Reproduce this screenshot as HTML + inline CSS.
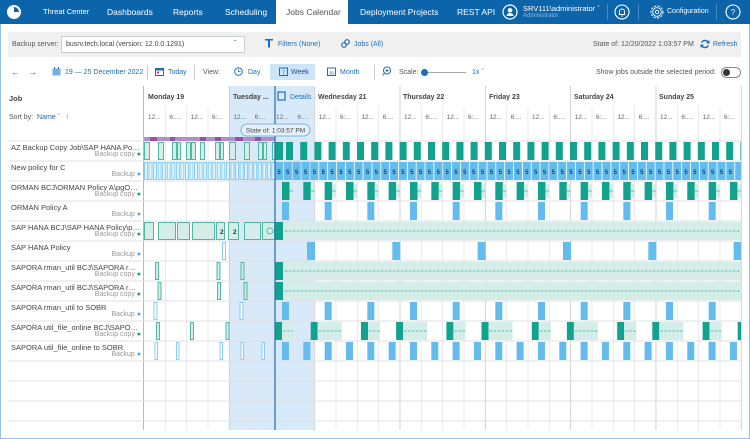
<!DOCTYPE html>
<html><head><meta charset="utf-8">
<style>
*{margin:0;padding:0;box-sizing:border-box}
body{width:750px;height:439px;position:relative;overflow:hidden;background:#fff;font-family:"Liberation Sans",sans-serif;font-size:8px;color:#444}
.a{position:absolute;white-space:nowrap}
#nav{position:absolute;left:0;top:0;width:750px;height:24px;background:#0c64ab}
.nt{position:absolute;top:7px;color:#fff;font-size:8.5px}
.blue{color:#1c6fb6}
.b{font-weight:bold}
.lbl{position:absolute;left:11px;width:129px;overflow:hidden;text-overflow:ellipsis;white-space:nowrap;font-size:7.5px;color:#444}
.typ{position:absolute;right:0;font-size:7px;color:#999;text-align:right;white-space:nowrap}
.tb{font-size:7px}
</style></head><body>
<div id="nav">
 <svg class="a" style="left:6px;top:4px" width="16" height="16"><circle cx="8" cy="8" r="7" fill="#fff"/><path d="M8 8V3A5 5 0 0 1 13 8Z" fill="#0c64ab"/></svg>
 <div class="nt" style="left:43px;font-size:7.5px">Threat Center</div>
 <div class="nt" style="left:107px">Dashboards</div>
 <div class="nt" style="left:173px">Reports</div>
 <div class="nt" style="left:225px">Scheduling</div>
 <div class="a" style="left:276px;top:0;width:72px;height:24px;background:#fff"></div>
 <div class="nt" style="left:286px;color:#555">Jobs Calendar</div>
 <div class="nt" style="left:360px">Deployment Projects</div>
 <div class="nt" style="left:457px">REST API</div>
 <svg class="a" style="left:502px;top:4px" width="16" height="16"><circle cx="8" cy="8" r="7" fill="none" stroke="#fff" stroke-width="1.2"/><circle cx="8" cy="6.3" r="2.3" fill="#fff"/><path d="M4.5 12a3.5 3 0 0 1 7 0Z" fill="#fff"/></svg>
 <div class="a" style="left:523px;top:4px;color:#fff;font-size:7.5px">SRV111\administrator &#711;</div>
 <div class="a" style="left:523px;top:13px;color:#8fb9e0;font-size:6px">Administrator</div>
 <div class="a" style="left:607px;top:4px;width:1px;height:16px;background:#4a8bc7"></div>
 <svg class="a" style="left:614px;top:4px" width="16" height="16"><circle cx="8" cy="8" r="7" fill="none" stroke="#fff" stroke-width="1.1"/><path d="M5.5 10.5V7.5a2.5 2.5 0 0 1 5 0v3ZM4.8 10.5h6.4M7.2 12h1.6" fill="none" stroke="#fff" stroke-width="0.9"/></svg>
 <div class="a" style="left:638px;top:4px;width:1px;height:16px;background:#4a8bc7"></div>
 <svg class="a" style="left:648px;top:3px" width="18" height="18"><circle cx="9" cy="9" r="6" fill="none" stroke="#fff" stroke-width="1" stroke-dasharray="2.2 1.4"/><circle cx="9" cy="9" r="4.3" fill="none" stroke="#fff" stroke-width="0.9"/><circle cx="9" cy="9" r="1.7" fill="none" stroke="#fff" stroke-width="0.9"/></svg>
 <div class="a" style="left:667px;top:8px;color:#fff;font-size:7px">Configuration</div>
 <div class="a" style="left:716px;top:4px;width:1px;height:16px;background:#4a8bc7"></div>
 <svg class="a" style="left:725px;top:4px" width="16" height="16"><circle cx="8" cy="8" r="7" fill="none" stroke="#fff" stroke-width="1.1"/><text x="8" y="11" fill="#fff" font-size="8" text-anchor="middle" font-family="Liberation Sans">?</text></svg>
</div>
<div class="a" style="left:0;top:24px;width:750px;height:415px;border:1.5px solid #93c1e8;border-top:none"></div>
<!-- toolbar -->
<div class="a" style="left:8px;top:32px;width:733px;height:25px;background:#f0f0f0"></div>
<div class="a tb" style="left:12px;top:41px;color:#555">Backup server:</div>
<div class="a" style="left:61px;top:36px;width:184px;height:17px;background:#fff;border:1px solid #ccc"></div>
<div class="a tb" style="left:66px;top:41px;color:#444">busrv.tech.local (version: 12.0.0.1291)</div>
<div class="a blue" style="left:234px;top:39px;font-size:8px">&#711;</div>
<svg class="a" style="left:265px;top:39px" width="8" height="9"><path d="M0 0h8v1.5H5v7H3v-7H0Z" fill="#1c6fb6"/></svg>
<div class="a blue tb" style="left:278px;top:41px">Filters (None)</div>
<svg class="a" style="left:341px;top:39px" width="9" height="9"><circle cx="3" cy="6" r="2.3" fill="none" stroke="#1c6fb6" stroke-width="1.2"/><circle cx="6" cy="3" r="2.3" fill="none" stroke="#1c6fb6" stroke-width="1.2"/></svg>
<div class="a blue tb" style="left:354px;top:41px">Jobs (All)</div>
<div class="a tb" style="left:593px;top:41px;color:#555">State of: 12/20/2022 1:03:57 PM</div>
<svg class="a" style="left:700px;top:39px" width="10" height="10"><path d="M8.5 4A3.7 3.7 0 0 0 1.7 3.5M1.5 6A3.7 3.7 0 0 0 8.3 6.5" fill="none" stroke="#1c6fb6" stroke-width="1.5"/><path d="M9.5 1v3.5H6ZM0.5 9V5.5H4Z" fill="#1c6fb6"/></svg>
<div class="a blue tb" style="left:713px;top:41px">Refresh</div>
<!-- controls row -->
<div class="a blue" style="left:11px;top:67px;font-size:9px">&#8592;</div>
<div class="a blue" style="left:28px;top:67px;font-size:9px">&#8594;</div>
<svg class="a" style="left:52px;top:67px" width="9" height="9"><rect x="0.5" y="1.5" width="8" height="7" fill="#7aaedc"/><rect x="2" y="0" width="1" height="2" fill="#1c6fb6"/><rect x="6" y="0" width="1" height="2" fill="#1c6fb6"/></svg>
<div class="a blue tb" style="left:65px;top:69px">19 — 25 December 2022</div>
<div class="a" style="left:147px;top:65px;width:1px;height:15px;background:#ccc"></div>
<svg class="a" style="left:155px;top:67px" width="9" height="9"><rect x="0.5" y="1.5" width="8" height="7" fill="none" stroke="#1c6fb6"/><rect x="1" y="2" width="7" height="1.5" fill="#1c6fb6"/><rect x="2" y="4.5" width="2" height="2" fill="#d33"/></svg>
<div class="a blue tb" style="left:168px;top:69px">Today</div>
<div class="a" style="left:194px;top:65px;width:1px;height:15px;background:#ccc"></div>
<div class="a tb" style="left:203px;top:69px;color:#555">View:</div>
<svg class="a" style="left:234px;top:67px" width="9" height="9"><circle cx="4.5" cy="4.5" r="3.8" fill="none" stroke="#1c6fb6"/><path d="M4.5 2v2.5h2" fill="none" stroke="#1c6fb6" stroke-width="0.8"/></svg>
<div class="a blue tb" style="left:248px;top:69px">Day</div>
<div class="a" style="left:270px;top:64px;width:45px;height:16px;background:#cde5f8"></div>
<svg class="a" style="left:279px;top:67px" width="9" height="9"><rect x="0.5" y="1" width="8" height="7.5" fill="none" stroke="#1c6fb6"/><text x="4.5" y="7.5" font-size="5" fill="#1c6fb6" text-anchor="middle" font-family="Liberation Sans">7</text></svg>
<div class="a tb" style="left:291px;top:69px;color:#1a4f80">Week</div>
<svg class="a" style="left:327px;top:67px" width="9" height="9"><rect x="0.5" y="1" width="8" height="7.5" fill="none" stroke="#1c6fb6"/><text x="4.5" y="7.5" font-size="4.5" fill="#1c6fb6" text-anchor="middle" font-family="Liberation Sans">30</text></svg>
<div class="a blue tb" style="left:340px;top:69px">Month</div>
<div class="a" style="left:374px;top:65px;width:1px;height:15px;background:#ccc"></div>
<svg class="a" style="left:382px;top:66px" width="10" height="10"><circle cx="5" cy="4.5" r="3.5" fill="none" stroke="#1c6fb6"/><path d="M3.5 4.5h3M5 3v3M2.5 7l-2 2.5" stroke="#1c6fb6" stroke-width="1"/></svg>
<div class="a tb" style="left:399px;top:69px;color:#555">Scale:</div>
<div class="a" style="left:424px;top:72px;width:42px;height:1px;background:#aaa"></div>
<div class="a" style="left:421px;top:69px;width:7px;height:7px;border-radius:50%;background:#1c6fb6"></div>
<div class="a blue tb" style="left:472px;top:69px">1x &#711;</div>
<div class="a tb" style="left:596px;top:69px;color:#555">Show jobs outside the selected period:</div>
<div class="a" style="left:721px;top:67px;width:20px;height:11px;border:1px solid #888;border-radius:6px"></div>
<div class="a" style="left:723px;top:69px;width:7px;height:7px;border-radius:50%;background:#333"></div>

<svg class="a" style="left:0;top:0" width="750" height="439" id="g">
 <rect x="229" y="86" width="85" height="344" fill="#d8eafa"/>
 <g id="lines"></g>
 <g id="bars"></g>
 <line x1="275" y1="86" x2="275" y2="430" stroke="#1f6fb7" stroke-width="1.2"/>
 <rect x="241" y="124" width="69" height="12" rx="6" fill="#e6f1fb" stroke="#5d9fd6" stroke-width="0.8"/>
 <text x="275.5" y="132.5" font-size="6.5" fill="#444" text-anchor="middle" font-family="Liberation Sans">State of: 1:03:57 PM</text>
 <g font-family="Liberation Sans" font-size="7" font-weight="bold" fill="#444">
  <text x="148" y="99">Monday 19</text>
  <text x="233" y="99">Tuesday ...</text>
  <text x="318" y="99">Wednesday 21</text>
  <text x="403" y="99">Thursday 22</text>
  <text x="489" y="99">Friday 23</text>
  <text x="574" y="99">Saturday 24</text>
  <text x="659" y="99">Sunday 25</text>
 </g>
 <rect x="278" y="92" width="7" height="8" fill="none" stroke="#1c6fb6" stroke-width="1.2"/>
 <text x="290" y="99" font-family="Liberation Sans" font-size="7" fill="#1c6fb6">Details</text>
 <g id="hrs" font-family="Liberation Sans" font-size="6.5" fill="#666"></g>
</svg>

<div class="a b" style="left:9px;top:94px;font-size:7.5px">Job</div>
<div class="a" style="left:9px;top:114px;font-size:7px;color:#555">Sort by: <span class="blue">&nbsp;Name &#711; &nbsp;&nbsp;&#8593;</span></div>

<div class="a" style="left:0;top:141px;width:141px;height:230px">
 <div class="lbl" style="top:2px">AZ Backup Copy Job\SAP HANA Policy\p...</div><div class="typ" style="top:10px">Backup copy <span style="color:#13a38f">●</span></div>
 <div class="lbl" style="top:22px">New policy for C</div><div class="typ" style="top:30px">Backup <span style="color:#4db3ec">●</span></div>
 <div class="lbl" style="top:42px">ORMAN BCJ\ORMAN Policy A\pgOracleL...</div><div class="typ" style="top:50px">Backup copy <span style="color:#13a38f">●</span></div>
 <div class="lbl" style="top:62px">ORMAN Policy A</div><div class="typ" style="top:70px">Backup <span style="color:#4db3ec">●</span></div>
 <div class="lbl" style="top:82px">SAP HANA BCJ\SAP HANA Policy\pgSLES...</div><div class="typ" style="top:90px">Backup copy <span style="color:#13a38f">●</span></div>
 <div class="lbl" style="top:102px">SAP HANA Policy</div><div class="typ" style="top:110px">Backup <span style="color:#4db3ec">●</span></div>
 <div class="lbl" style="top:122px">SAPORA rman_util BCJ\SAPORA rman_ut...</div><div class="typ" style="top:130px">Backup copy <span style="color:#13a38f">●</span></div>
 <div class="lbl" style="top:142px">SAPORA rman_util BCJ\SAPORA rman_ut...</div><div class="typ" style="top:150px">Backup copy <span style="color:#13a38f">●</span></div>
 <div class="lbl" style="top:162px">SAPORA rman_util to SOBR</div><div class="typ" style="top:170px">Backup <span style="color:#4db3ec">●</span></div>
 <div class="lbl" style="top:182px">SAPORA util_file_online BCJ\SAPORA util...</div><div class="typ" style="top:190px">Backup copy <span style="color:#13a38f">●</span></div>
 <div class="lbl" style="top:202px">SAPORA util_file_online to SOBR</div><div class="typ" style="top:210px">Backup <span style="color:#4db3ec">●</span></div>
</div>

<script>
var NS='http://www.w3.org/2000/svg';
function el(p,t,a){var e=document.createElementNS(NS,t);for(var k in a)e.setAttribute(k,a[k]);p.appendChild(e);return e;}
var L=document.getElementById('lines'),B=document.getElementById('bars'),H=document.getElementById('hrs');
var X0=144,DW=85.33,Q=DW/4,XE=741;
for(var j=1;j<28;j++){if(j%4)el(L,'line',{x1:X0+Q*j,y1:106,x2:X0+Q*j,y2:430,stroke:'#e4e4e4','stroke-width':0.8});}
for(var d=1;d<=7;d++)el(L,'line',{x1:X0+DW*d,y1:86,x2:X0+DW*d,y2:430,stroke:'#cdcdcd','stroke-width':0.9});
el(L,'line',{x1:143.5,y1:86,x2:143.5,y2:430,stroke:'#b8b8b8','stroke-width':1});
for(var i=0;i<15;i++)el(L,'line',{x1:8,y1:141+20*i,x2:XE,y2:141+20*i,stroke:'#e0e0e0','stroke-width':0.9});
for(var j=0;j<28;j++){var t=el(H,'text',{x:X0+Q*j+4,y:119});t.textContent=(j%2?'6:...':'12...');}
var T='#12a38e',LT='#d4ede9',LO='#3db39c',BL='#62bcee',LB='#7ec8f1';
function R(x,y,w,h,f,s){if(x>=XE)return;if(x+w>XE)w=XE-x;var a={x:x,y:y,width:w,height:h,fill:f};if(s){a.stroke=s;a['stroke-width']=0.9;}el(B,'rect',a);}
function ry(i){return 141+20*i+1;}
R(144,137,131,4,'#b48cc8');[[150,7],[170,5],[200,6],[215,6],[235,8],[255,6]].forEach(function(p){R(p[0],137,p[1],4,'#8e55a8');});
[[144,5],[158,5],[172,4],[177,3],[186,4],[191,4],[200,4],[215,4],[220,3],[229,6],[244,5],[258,4],[263,3],[272,3]].forEach(function(p){R(p[0]+.5,ry(0)+.5,p[1],17,LT,LO);});
R(275,ry(0),8,18,T);for(var x=286;x<XE;x+=14.2)R(x,ry(0),7,18,T);
for(var x=144.5;x<272;x+=4.55)R(x,ry(1)+.5,3,17,'#e4f4fd',LB);
for(var x=275;x<XE;x+=8.85){R(x,ry(1),8,18,BL);if(x+6<XE){var t=el(B,'text',{x:x+4,y:ry(1)+12,'font-size':6,'font-weight':'bold',fill:'#1f3d55','text-anchor':'middle','font-family':'Liberation Sans'});t.textContent='5';}}
for(var x=282;x<XE;x+=21.33){R(x,ry(2),7.5,18,T);R(x+7.5,ry(2)+2,3.5,14,LT);el(B,'line',{x1:x+7.5,y1:ry(2)+9,x2:Math.min(x+11,XE),y2:ry(2)+9,stroke:LO,'stroke-width':0.8});}
for(var x=282;x<XE;x+=42.67)R(x,ry(3),7,18,BL);
function band(i){R(275,ry(i),8,18,T);R(283,ry(i),XE-283,18,LT);el(B,'line',{x1:285,y1:ry(i)+9,x2:XE,y2:ry(i)+9,stroke:'#2aa995','stroke-width':0.8,'stroke-dasharray':'2.5 1.5'});}
[[144,9],[158,17],[177,12],[192,22],[216,8],[228,10],[244,16],[262,12]].forEach(function(p){R(p[0]+.5,ry(4)+.5,p[1],17,LT,LO);});
band(4);
[[216,'2'],[229,'2']].forEach(function(p){var t=el(B,'text',{x:p[0]+4,y:ry(4)+12,'font-size':6.5,'font-weight':'bold',fill:'#333','font-family':'Liberation Sans'});t.textContent=p[1];});
el(B,'circle',{cx:270,cy:ry(4)+9,r:3,fill:'none',stroke:LO,'stroke-width':0.8});
R(222.5,ry(5)+.5,3,17,'#fff',LB);for(var x=307;x<XE;x+=85.33)R(x,ry(5),8,18,BL);
[155.5,217,241].forEach(function(x){R(x,ry(6)+.5,3,17,LT,LO);});band(6);
[158,217.5,244].forEach(function(x){R(x,ry(7)+.5,3,17,LT,LO);});band(7);
[154,240].forEach(function(x){R(x,ry(8)+.5,3,17,'#fff',LB);});for(var x=282;x<XE;x+=42.67)R(x,ry(8),7,18,BL);
[156.5,190.5,226].forEach(function(x){R(x,ry(9)+.5,3,17,LT,LO);});
function seg(x,len){R(x,ry(9),7,18,T);if(x+7<XE){R(x+7,ry(9),Math.min(len,XE-x-7),18,LT);el(B,'line',{x1:x+8,y1:ry(9)+9,x2:Math.min(x+7+len,XE),y2:ry(9)+9,stroke:'#2aa995','stroke-width':0.8,'stroke-dasharray':'2.5 1.5'});}}
seg(275,11);for(var k=0;k<6;k++){seg(310.7+85.4*k,24);seg(361+85.4*k,12);}
[155,176.5,220,241,262].forEach(function(x){R(x,ry(10)+.5,2.5,17,'#fff',LB);});
for(var x=282;x<XE;x+=21.33)R(x,ry(10),7,18,BL);
</script>
</body></html>
